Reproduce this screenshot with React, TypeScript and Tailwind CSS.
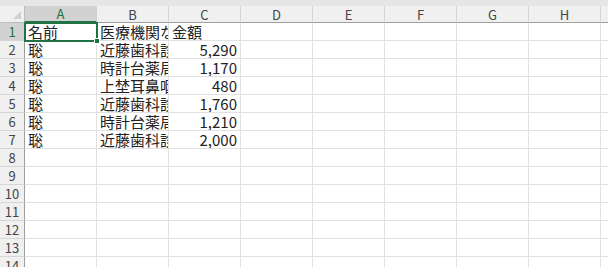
import React from "react";

const cols = ["A", "B", "C", "D", "E", "F", "G", "H"];

const data: Record<number, string[]> = {
  1: ["名前", "医療機関な", "金額"],
  2: ["聡", "近藤歯科診", "5,290"],
  3: ["聡", "時計台薬局", "1,170"],
  4: ["聡", "上埜耳鼻咽", "480"],
  5: ["聡", "近藤歯科診", "1,760"],
  6: ["聡", "時計台薬局", "1,210"],
  7: ["聡", "近藤歯科診", "2,000"],
};

const rows = Array.from({ length: 14 }, (_, i) => i + 1);

const font = { fontFamily: '"Noto Sans CJK JP", "Liberation Sans", sans-serif' };

export default function App() {
  return (
    <div className="w-[608px] h-[267px] overflow-hidden bg-white text-[#222]" style={font}>
      <div className="h-[6px] bg-[#e6e6e6]" />
      <div className="relative">
        {/* header row */}
        <div className="flex h-[17px] bg-[#f0f0f0]">
          <div className="relative w-[25px] shrink-0 border-r border-b border-[#bcbcbc]">
            <div className="absolute right-[3px] bottom-[3px] w-0 h-0 border-l-[8px] border-l-transparent border-b-[8px] border-b-[#d0d0d0]" />
          </div>
          {cols.map((c) => (
            <div
              key={c}
              className={`w-[72px] shrink-0 flex items-center justify-center text-[13px] leading-none border-r ${
                c === "A"
                  ? "bg-[#d2d2d2] text-[#217346] border-b-2 border-b-[#217346] border-r-[#d0d0d0]"
                  : "text-[#444] border-b border-b-[#9e9e9e] border-r-[#d4d4d4]"
              }`}
            >
              {c}
            </div>
          ))}
          <div className="flex-1 border-b border-[#9e9e9e]" />
        </div>

        {/* body rows */}
        {rows.map((r) => {
          const vals = data[r] ?? [];
          return (
            <div key={r} className="flex h-[18px]">
              <div
                className={`w-[25px] shrink-0 flex items-center justify-center text-[13px] leading-none border-r border-b border-b-[#d6d6d6] border-r-[#9e9e9e] ${
                  r === 1 ? "bg-[#d2d2d2] text-[#217346]" : "bg-[#f0f0f0] text-[#444]"
                }`}
              >
                {r}
              </div>
              {cols.map((c, ci) => {
                const v = vals[ci];
                const isNum = ci === 2 && r > 1;
                return (
                  <div
                    key={c}
                    className={`w-[72px] shrink-0 overflow-hidden whitespace-nowrap flex items-center text-[15px] leading-none border-r border-b border-[#e1e1e1] ${
                      isNum ? "justify-end pr-[3px]" : "pl-[3px]"
                    }`}
                  >
                    {v && (ci === 2 && r === 1 ? <span className="underline underline-offset-2">{v}</span> : v)}
                  </div>
                );
              })}
              <div className="flex-1 border-b border-[#e1e1e1]" />
            </div>
          );
        })}

        {/* selection on A1 */}
        <div className="absolute left-[24px] top-[16px] w-[74px] h-[20px] border-2 border-[#217346] pointer-events-none">
          <div className="absolute -right-[4px] -bottom-[4px] w-[6px] h-[6px] bg-[#217346] border border-white" />
        </div>
      </div>
    </div>
  );
}
